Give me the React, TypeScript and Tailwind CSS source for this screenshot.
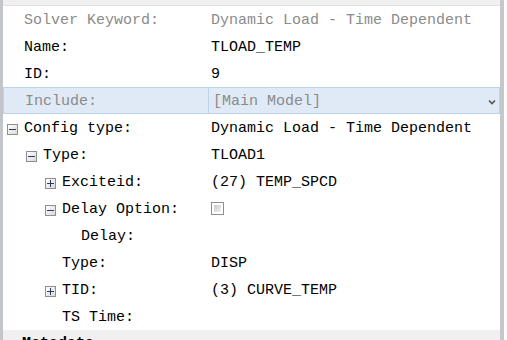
import React from 'react';

type Row = {
  label: string;
  value?: React.ReactNode;
  level: number;
  toggle?: 'plus' | 'minus';
  muted?: boolean;
  selected?: boolean;
  dropdown?: boolean;
};

// left padding per tree level: plain labels, and labels with a +/- box in front
const textIndent = ['pl-[21px]', 'pl-[40px]', 'pl-[59px]', 'pl-[78px]'];
const boxIndent = ['pl-[4px]', 'pl-[23px]', 'pl-[42px]', 'pl-[61px]'];

function ToggleBox({ kind }: { kind: 'plus' | 'minus' }) {
  return (
    <span className="relative mr-[6px] inline-block h-[11px] w-[11px] shrink-0 border border-[#8e8f8f] bg-gradient-to-br from-white to-[#d9d9d9]">
      <span className="absolute left-[1px] top-[4px] h-[1px] w-[7px] bg-[#2c3c5c]" />
      {kind === 'plus' && <span className="absolute left-[4px] top-[1px] h-[7px] w-[1px] bg-[#2c3c5c]" />}
    </span>
  );
}

function Checkbox() {
  return (
    <span className="inline-block h-[13px] w-[13px] border border-[#8f8f8f] bg-white p-[2px] align-middle">
      <span className="block h-full w-full bg-gradient-to-br from-[#c9c9c9] to-[#f2f2f2]" />
    </span>
  );
}

const rows: Row[] = [
  { label: 'Solver Keyword:', value: 'Dynamic Load - Time Dependent', level: 0, muted: true },
  { label: 'Name:', value: 'TLOAD_TEMP', level: 0 },
  { label: 'ID:', value: '9', level: 0 },
  { label: 'Include:', value: '[Main Model]', level: 0, muted: true, selected: true, dropdown: true },
  { label: 'Config type:', value: 'Dynamic Load - Time Dependent', level: 0, toggle: 'minus' },
  { label: 'Type:', value: 'TLOAD1', level: 1, toggle: 'minus' },
  { label: 'Exciteid:', value: '(27) TEMP_SPCD', level: 2, toggle: 'plus' },
  { label: 'Delay Option:', value: <Checkbox />, level: 2, toggle: 'minus' },
  { label: 'Delay:', level: 3 },
  { label: 'Type:', value: 'DISP', level: 2 },
  { label: 'TID:', value: '(3) CURVE_TEMP', level: 2, toggle: 'plus' },
  { label: 'TS Time:', level: 2 },
];

export default function App() {
  return (
    <div
      className="flex h-[340px] w-[507px] overflow-hidden bg-white text-[15px] text-black"
      style={{ fontFamily: '"Liberation Mono", "DejaVu Sans Mono", monospace' }}
    >
      <div className="flex min-w-0 flex-1 flex-col border-l-[3px] border-[#c2c6ca]">
        <div className="h-[6px] shrink-0 border-b border-[#e2e2e2] bg-[#f0f0f0]" />
        {rows.map((r, i) => {
          const muted = r.muted ? 'text-[#8b8b8b]' : '';
          return (
            <div
              key={i}
              className={`flex h-[27px] shrink-0 items-center ${
                r.selected ? 'border border-[#bcd3ec] bg-[#dfeaf6]' : ''
              }`}
            >
              <div
                className={`flex h-full w-[204px] shrink-0 items-center pt-[3px] ${
                  r.toggle ? boxIndent[r.level] : textIndent[r.level]
                } ${muted}`}
              >
                {r.toggle && <ToggleBox kind={r.toggle} />}
                <span className="whitespace-pre">{r.label}</span>
              </div>
              <div
                className={`flex h-full flex-1 items-center pl-[4px] pt-[3px] ${muted} ${
                  r.selected ? 'border-l border-[#bcd3ec]' : ''
                }`}
              >
                <span className="whitespace-pre">{r.value}</span>
                {r.dropdown && (
                  <svg className="ml-auto mr-[3px]" width="8" height="6" viewBox="0 0 8 6">
                    <path d="M1 1.5 L4 4.5 L7 1.5" fill="none" stroke="#555" strokeWidth="1.6" />
                  </svg>
                )}
              </div>
            </div>
          );
        })}
        <div className="flex-1 bg-[#f0f0f0] pl-[19px] pt-[5px] font-bold leading-[18px]">Metadata</div>
      </div>
      <div className="w-[4px] shrink-0 bg-[#c4c8cc]" />
      <div className="w-[3px] shrink-0 bg-white" />
    </div>
  );
}
